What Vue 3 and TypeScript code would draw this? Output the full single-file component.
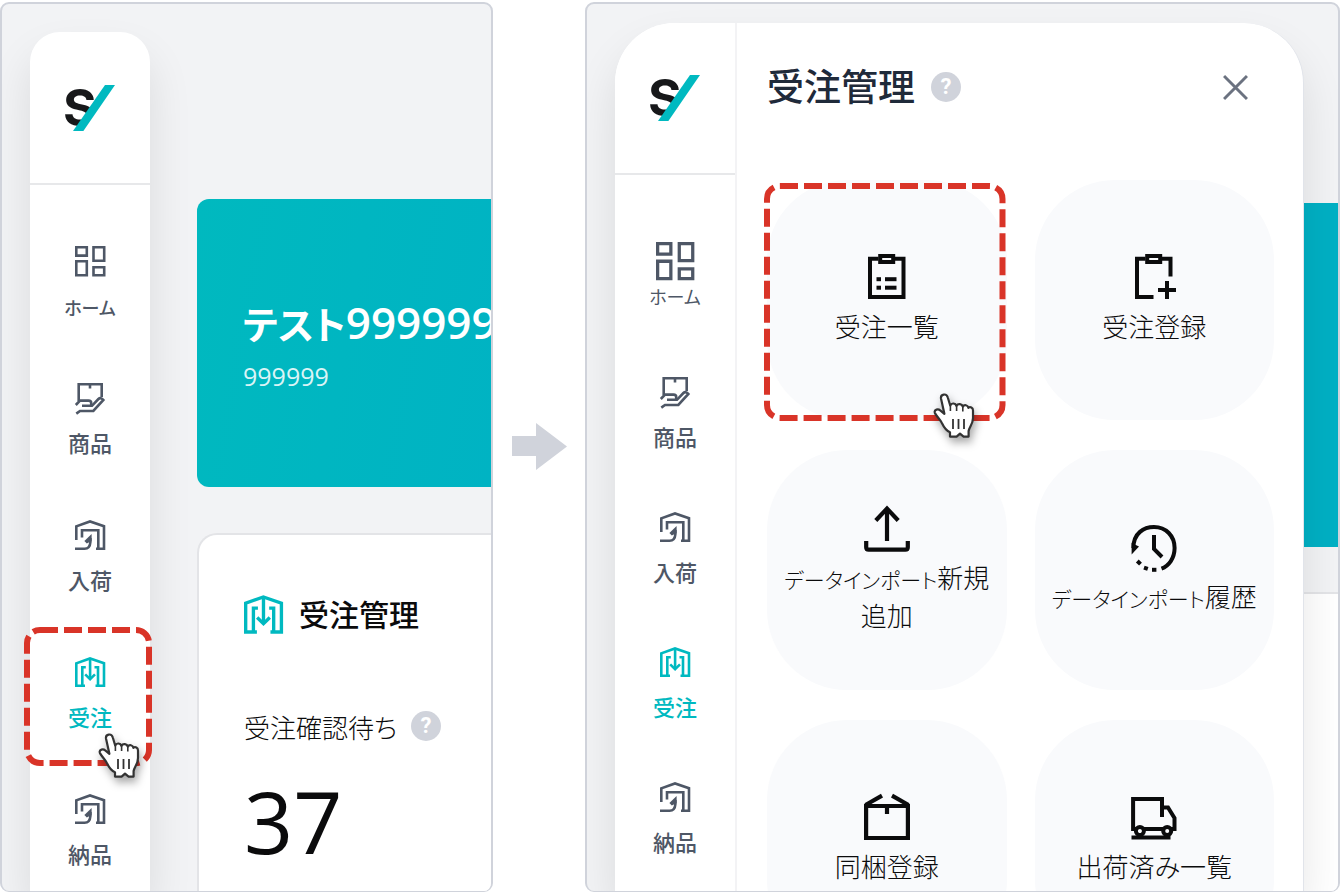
<script setup lang="ts">
import { h, type FunctionalComponent } from 'vue'

type IconName =
  | 'home' | 'product' | 'inbound' | 'order'
  | 'list' | 'add' | 'upload' | 'history' | 'box' | 'truck'

interface NavItem { icon: IconName; label: string; active?: boolean }
interface Tile { icon: IconName; label: string; marked?: boolean }

const navItems: NavItem[] = [
  { icon: 'home', label: 'ホーム' },
  { icon: 'product', label: '商品' },
  { icon: 'inbound', label: '入荷' },
  { icon: 'order', label: '受注', active: true },
  { icon: 'inbound', label: '納品' },
]

const tiles: Tile[] = [
  { icon: 'list', label: '受注一覧', marked: true },
  { icon: 'add', label: '受注登録' },
  { icon: 'upload', label: 'データインポート新規\n追加' },
  { icon: 'history', label: 'データインポート履歴' },
  { icon: 'box', label: '同梱登録' },
  { icon: 'truck', label: '出荷済み一覧' },
]

const shapes: Record<IconName, { box: number; width: number; paths: string[]; fills?: string[] }> = {
  home: {
    box: 31, width: 2.6,
    paths: ['M1.3 1.3H11.8V9.6H1.3Z', 'M1.3 15.3H11.8V29.2H1.3Z', 'M18.5 1.3H29.2V14.8H18.5Z', 'M18.5 21.3H29.2V29.2H18.5Z'],
  },
  product: {
    box: 31, width: 2.6,
    paths: ['M3.7 18V1.3H26.7V14', 'M15 1V5.5', 'M0.8 22L5 17.6H13.5Q16.2 17.6 16.2 20V22', 'M7 22.8H17L23.4 16Q25.8 13.8 28.4 17L18.3 28H5L1.3 30.6'],
  },
  inbound: {
    box: 31, width: 2.6,
    paths: ['M1.3 20V6.3L15 1.5L29 6.3V28.8H21', 'M23.3 28.8V10.2H7V17.6', 'M0 28.8H9.5Q15 28.8 15.4 22V18'],
    fills: ['M16.6 14L9.4 21L11.8 23.4L16.6 21Z'],
  },
  order: {
    box: 31, width: 2.6,
    paths: ['M10 28.7H1.3V6.3L15 1.5L29 6.3V28.7H20.5', 'M7.3 28.7V10.2H10.8', 'M23 28.7V10.2H19.5', 'M15.1 1.5V22', 'M10.2 17.4L15.1 22.2L20 17.4'],
  },
  list: {
    box: 46, width: 4,
    paths: ['M14.5 4.7H6V43H39.5V4.7H31', 'M12.5 25.2H17', 'M21 25.2H32.5', 'M12.5 33.7H17', 'M21 33.7H32.5', 'M16.2 2H29.2V8H16.2Z'],
  },
  add: {
    box: 46, width: 4,
    paths: ['M22.5 43H6V4.7H14.5', 'M31 4.7H39.5V22.5', 'M36 27V45', 'M27 36H45', 'M16.2 2H29.2V8H16.2Z'],
  },
  upload: {
    box: 46, width: 4.2,
    paths: ['M23 36V4', 'M11.8 15.5L23 3.6L34.2 15.5', 'M2.2 36V42.2Q2.2 44.7 4.7 44.7H41.3Q43.8 44.7 43.8 42.2V36'],
  },
  history: {
    box: 46, width: 4,
    paths: ['M2.4 24C2.4 9 13 3 23 3C35 3 43.6 12 43.6 24C43.6 34.5 37.5 42 30.5 44.6', 'M23 11V25L31 33', 'M21 45.8H25.4', 'M13 43.6L16.8 44.9', 'M6.3 37L9.5 40.2'],
    fills: ['M0.6 19V30.5L8 22.5Z'],
  },
  box: {
    box: 46, width: 4.2,
    paths: ['M2.1 12H43.9V44H2.1Z', 'M23 12V20', 'M1.5 11L18 1.7', 'M44.5 11L28 1.7'],
  },
  truck: {
    box: 46, width: 4,
    paths: ['M5 35H2.1V5H31V23', 'M31 13.5H37L43.5 24V35H39', 'M13 35H32', 'M0.5 43.5H39.5', 'M4.9 37A4 4 0 1 0 12.9 37A4 4 0 1 0 4.9 37', 'M32.2 37A4 4 0 1 0 40.2 37A4 4 0 1 0 32.2 37'],
  },
}

const Glyph: FunctionalComponent<{ name: IconName }> = ({ name }) => {
  const s = shapes[name]
  return h('svg', { viewBox: `0 0 ${s.box} ${s.box}`, fill: 'none', overflow: 'visible', 'aria-hidden': 'true' }, [
    ...s.paths.map((d) => h('path', { d, stroke: 'currentColor', 'stroke-width': s.width })),
    ...(s.fills ?? []).map((d) => h('path', { d, fill: 'currentColor' })),
  ])
}
Glyph.props = ['name']

// Katakana runs get their own span so that they can be set smaller than the kanji.
const Label: FunctionalComponent<{ text: string }> = ({ text }) =>
  h('span', text.split(/([ァ-ヶー]+)/).filter(Boolean).map((part) =>
    /^[ァ-ヶー]/.test(part) ? h('span', { class: 'kana' }, part) : part,
  ))
Label.props = ['text']

const BrandMark: FunctionalComponent = () =>
  h('svg', { viewBox: '0 0 50 46', overflow: 'visible', role: 'img', 'aria-label': 'S/' }, [
    h('text', { x: -2, y: 41, fill: '#17181a', 'font-size': 51, 'font-weight': 700, 'font-family': 'Inter, sans-serif' }, 'S'),
    h('path', { d: 'M49 0H50V46H17Z', fill: '#fff' }),
    h('path', { d: 'M40 0H50L18.4 46H8Z', fill: '#00b9c0' }),
  ])

const Marker: FunctionalComponent = () =>
  h('svg', { 'aria-hidden': 'true' }, [h('rect', { x: 3, y: 3, rx: 13 })])

const Pointer: FunctionalComponent = () =>
  h('svg', { viewBox: '0 0 42 46', 'aria-hidden': 'true' }, [
    h('path', {
      d: 'M8 5.5C7.4 0.8 13.6 0 14.8 4.5L17.2 12.5C18.5 9.6 22.5 10 23.4 12.8C25 10.2 29 10.8 29.8 13.6C31.2 11.3 34.8 12 35.4 14.8C37.2 13.2 40 14.6 40 17.4V25C40 31 36.6 33.6 35.6 38V43.6H30.6L27 40.6L23.6 43.6H17V39.2C13 37.6 10.8 34 9 30.2C7.4 26.6 2.6 22.4 1.8 19.6C1 16.4 5.2 15.6 7.2 17.4L11.4 20.8Z',
      fill: '#fff', stroke: '#333', 'stroke-width': 2.2, 'stroke-linejoin': 'round',
    }),
    h('path', { d: 'M20 26V36M25.5 26V36M31 26V36', stroke: '#333', 'stroke-width': 1.8 }),
    h('path', { d: 'M17.4 12V18M23.6 13V18M29.8 14V18.5', stroke: '#333', 'stroke-width': 1.6 }),
  ])
</script>

<template>
  <main class="stage">
    <section class="frame">
      <div class="home">
        <nav class="rail floating">
          <a class="brand" href="#"><BrandMark class="brand-mark" /></a>
          <ul class="menu">
            <li v-for="item in navItems" :key="item.label" class="menu-item">
              <a href="#" class="menu-link" :class="{ active: item.active }">
                <Glyph :name="item.icon" class="menu-icon" />
                <Label :text="item.label" />
              </a>
              <template v-if="item.active">
                <Marker class="marker" />
                <Pointer class="pointer" />
              </template>
            </li>
          </ul>
        </nav>
        <div class="content">
          <article class="banner">
            <h1><Label text="テスト999999" /></h1>
            <p>999999</p>
          </article>
          <article class="card">
            <h2><Glyph name="order" class="card-icon" />受注管理</h2>
            <div class="metric-name">
              <span>受注確認待ち</span>
              <button type="button" class="help" aria-label="受注確認待ち ヘルプ">?</button>
            </div>
            <p class="metric">37</p>
          </article>
        </div>
      </div>
    </section>

    <div class="step">
      <svg viewBox="0 0 55 48" aria-hidden="true"><path d="M0 13H24V0L55 23.5L24 47V33H0Z" fill="#d0d3db" /></svg>
    </div>

    <section class="frame">
      <div class="layers">
        <div class="backdrop">
          <div class="backdrop-banner"></div>
          <div class="backdrop-card"></div>
        </div>
        <div class="panel">
          <nav class="rail docked">
            <a class="brand" href="#"><BrandMark class="brand-mark" /></a>
            <ul class="menu">
              <li v-for="item in navItems" :key="item.label" class="menu-item">
                <a href="#" class="menu-link" :class="{ active: item.active, large: item.icon === 'home' }">
                  <Glyph :name="item.icon" class="menu-icon" />
                  <Label :text="item.label" />
                </a>
              </li>
            </ul>
          </nav>
          <div class="drawer">
            <header>
              <h2>受注管理</h2>
              <button type="button" class="help" aria-label="受注管理 ヘルプ">?</button>
              <button type="button" class="close" aria-label="閉じる">
                <svg viewBox="0 0 24 24" aria-hidden="true"><path d="M1 1L23 23M23 1L1 23" stroke="currentColor" stroke-width="2.8" /></svg>
              </button>
            </header>
            <div class="tiles">
              <div v-for="tile in tiles" :key="tile.label" class="tile-cell">
                <a href="#" class="tile">
                  <Glyph :name="tile.icon" class="tile-icon" />
                  <Label :text="tile.label" />
                </a>
                <template v-if="tile.marked">
                  <Marker class="marker" />
                  <Pointer class="pointer" />
                </template>
              </div>
            </div>
          </div>
        </div>
      </div>
    </section>
  </main>
</template>

<style>
body {
  margin: 0;
  background: #fff;
}
</style>

<style scoped>
* {
  box-sizing: border-box;
}

h1, h2, p, ul {
  margin: 0;
  padding: 0;
}

.stage {
  display: grid;
  grid-template-columns: minmax(0, 493fr) 92px minmax(0, 755fr);
  height: 100vh;
  padding-top: 2px;
  overflow: hidden;
  color: #0b0b0c;
  font-family: "Open Sans", "Noto Sans CJK JP", sans-serif;
  font-feature-settings: "palt";
}

.stage :deep(.kana) {
  line-height: 1;
}

.frame {
  min-height: 0;
  overflow: hidden;
  border: 2px solid #d0d3db;
  border-bottom-width: 1px;
  border-radius: 9px;
  background: #f2f3f5;
}

.step {
  display: flex;
  align-items: center;
  justify-content: center;
}

.step svg {
  width: 55px;
  height: 48px;
}

.home {
  display: flex;
  gap: 47px;
  height: 100%;
  padding-left: 28px;
}

.rail {
  flex: none;
  width: 120px;
  background: #fff;
}

.floating {
  margin-top: 28px;
  border-radius: 30px 30px 0 0;
  box-shadow: 0 24px 44px rgba(0, 0, 0, 0.1);
}

.brand {
  display: flex;
  justify-content: center;
  height: 153px;
  padding-top: 53px;
  border-bottom: 2px solid #e7e8ea;
}

.brand-mark {
  width: 50px;
  height: 46px;
}

.menu {
  padding-top: 32px;
  list-style: none;
}

.menu-item {
  position: relative;
  height: 137px;
}

.menu-link {
  display: flex;
  flex-direction: column;
  align-items: center;
  gap: 13px;
  padding-top: 29px;
  color: #4e5766;
  font-size: 22px;
  font-weight: 500;
  line-height: 32px;
  text-decoration: none;
}

.menu-link :deep(.kana) {
  font-size: 18px;
}

.menu-link.active {
  color: #00b9c0;
}

.menu-icon {
  width: 31px;
  height: 31px;
}

.marker {
  position: absolute;
  inset: -1px -2px -1px -6px;
  width: calc(100% + 8px);
  height: calc(100% + 2px);
  pointer-events: none;
}

.marker :deep(rect) {
  width: calc(100% - 6px);
  height: calc(100% - 6px);
  fill: none;
  stroke: #d93428;
  stroke-width: 6px;
  stroke-dasharray: 18 6;
}

.pointer {
  position: absolute;
  right: 10px;
  bottom: -14px;
  width: 42px;
  height: 46px;
  overflow: visible;
  filter: drop-shadow(2px 5px 4px rgba(0, 0, 0, 0.35));
}

.content {
  flex: 1;
  display: flex;
  flex-direction: column;
  gap: 46px;
  min-width: 0;
  padding-top: 195px;
}

.banner {
  flex: none;
  height: 288px;
  padding: 91px 0 0 46px;
  border-radius: 12px 0 0 12px;
  background: linear-gradient(100deg, #00b9bf, #00b3c3);
  color: #fff;
  white-space: nowrap;
}

.banner h1 {
  font-size: 44px;
  font-weight: 600;
  line-height: 64px;
}

.banner h1 :deep(.kana) {
  font-size: 38px;
}

.banner p {
  color: #daf4f6;
  font-size: 25px;
  line-height: 44px;
}

.card {
  flex: 1;
  padding: 60px 0 0 45px;
  border: 2px solid #e3e4e7;
  border-width: 2px 0 0 2px;
  border-radius: 20px 0 0 0;
  background: #fff;
}

.card h2 {
  display: flex;
  align-items: center;
  gap: 15px;
  font-size: 30px;
  font-weight: 500;
  line-height: 38px;
}

.card-icon {
  width: 40px;
  height: 40px;
  color: #00b9c0;
}

.metric-name {
  display: flex;
  align-items: center;
  gap: 14px;
  margin-top: 70px;
  font-size: 26px;
  font-weight: 300;
  line-height: 38px;
}

.metric-name span {
  padding-top: 4px;
}

.help {
  display: flex;
  align-items: center;
  justify-content: center;
  width: 30px;
  height: 30px;
  padding: 0;
  border: 0;
  border-radius: 50%;
  background: #d0d3db;
  color: #fff;
  font-family: Roboto, sans-serif;
  font-size: 22px;
  font-weight: 700;
  line-height: 30px;
}

.metric {
  margin-top: 24px;
  font-size: 86px;
  line-height: 100px;
}

.layers {
  display: grid;
  grid-template: minmax(0, 1fr) / minmax(0, 1fr);
  height: 100%;
}

.backdrop,
.panel {
  grid-area: 1 / 1;
}

.backdrop {
  display: flex;
  flex-direction: column;
  gap: 45px;
  margin-left: 50%;
  padding-top: 199px;
}

.backdrop-banner {
  flex: none;
  height: 344px;
  background: #00b0c4;
}

.backdrop-card {
  flex: 1;
  border-top: 2px solid #e3e4e7;
  background: #fff;
}

.panel {
  z-index: 1;
  display: flex;
  margin: 19px 34px 0 28px;
  border-right: 1px solid #e1e4ea;
  border-radius: 60px 60px 0 0;
  background: #fff;
  box-shadow: 0 24px 44px rgba(0, 0, 0, 0.1);
}

.docked {
  width: 122px;
  border-right: 2px solid #f3f3f5;
  border-radius: 60px 0 0 0;
}

.docked .brand {
  height: 152px;
  padding-top: 52px;
}

.docked .menu {
  padding-top: 38px;
}

.docked .menu-item {
  height: 135px;
}

.docked .large {
  gap: 0;
  font-weight: 400;
  line-height: 28px;
}

.docked .large .menu-icon {
  width: 39px;
  height: 39px;
}

.drawer {
  flex: 1;
  min-width: 0;
  padding: 0 29px 0 30px;
}

.drawer header {
  display: flex;
  align-items: center;
  gap: 16px;
  height: 128px;
  margin-bottom: 29px;
  color: #1f2a3a;
}

.drawer h2 {
  font-size: 37px;
  font-weight: 500;
  line-height: 56px;
}

.close {
  display: flex;
  margin-left: auto;
  margin-right: 16px;
  padding: 10px;
  border: 0;
  background: none;
  color: #6b7280;
}

.close svg {
  width: 25px;
  height: 25px;
}

.tiles {
  display: grid;
  grid-template-columns: repeat(2, minmax(0, 1fr));
  gap: 30px 28px;
}

.tile-cell {
  position: relative;
}

.tile {
  display: flex;
  flex-direction: column;
  align-items: center;
  justify-content: center;
  gap: 8px;
  height: 240px;
  border-radius: 80px;
  background: #f9fafc;
  color: #0b0b0c;
  font-size: 26px;
  font-weight: 300;
  line-height: 38px;
  text-align: center;
  text-decoration: none;
  white-space: pre;
}

.tile :deep(.kana) {
  font-size: 21px;
}

.tile-icon {
  width: 46px;
  height: 46px;
}

.tile-cell .marker {
  inset: 3px 1px -1px -3px;
  width: calc(100% + 2px);
  height: calc(100% - 2px);
}

.tile-cell .pointer {
  right: 32px;
  bottom: -19px;
}
</style>
